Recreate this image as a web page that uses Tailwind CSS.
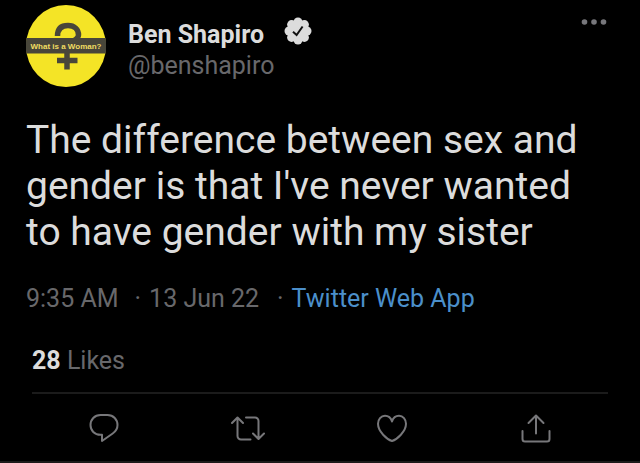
<!DOCTYPE html>
<html lang="en">
<head>
<meta charset="utf-8">
<meta name="viewport" content="width=device-width, initial-scale=1">
<title>Ben Shapiro on Twitter</title>
<script src="https://cdn.jsdelivr.net/npm/@tailwindcss/browser@4"></script>
</head>
<body class="bg-black font-[Roboto,'Liberation_Sans',sans-serif] text-[#dcdcdc]">
<article class="flex min-h-screen flex-col border-b-2 border-[#1c1a1a]">
  <header class="flex items-start px-[26px] pt-[5px]">
    <svg class="h-[82px] w-20 shrink-0" viewBox="0 0 80 82" role="img" aria-label="What is a Woman?">
      <ellipse cx="40" cy="41" rx="40" ry="41" fill="#f4e426"/>
      <path d="M31.500 31C31.500 24 35 20.500 42 20.500c6.500 0 10.500 4 10.500 9.500 0 6-11.500 6.500-11.500 13v21.500M31 55.500h20.500" fill="none" stroke="#48463a" stroke-width="5.500"/>
      <path d="M0.500 33h79a41 41 0 0 1 0 15.500h-79a41 41 0 0 1 0-15.500z" fill="#48463a"/>
      <text x="40" y="44" text-anchor="middle" class="fill-[#f0dc62] font-['Liberation_Sans',sans-serif] text-[8px] font-bold">What is a Woman?</text>
    </svg>
    <div class="ml-[22px] mt-[14px] flex-1">
      <div class="flex items-center gap-5">
        <h1 class="text-[25px] leading-[31px] font-bold">Ben Shapiro</h1>
        <svg class="-mt-2 size-7" viewBox="0 0 28 28" role="img" aria-label="Verified">
          <g fill="#dcdcdc"><circle cx="14" cy="14" r="10.500"/><circle cx="14" cy="5" r="4.500"/><circle cx="20.400" cy="7.600" r="4.500"/><circle cx="23" cy="14" r="4.500"/><circle cx="20.400" cy="20.400" r="4.500"/><circle cx="14" cy="23" r="4.500"/><circle cx="7.600" cy="20.400" r="4.500"/><circle cx="5" cy="14" r="4.500"/><circle cx="7.600" cy="7.600" r="4.500"/></g>
          <path d="M9 14.800l3.600 3.200 6-8.500" fill="none" stroke="#111" stroke-width="2"/>
        </svg>
      </div>
      <p class="text-[25px] leading-[31px] text-[#68686b]">@benshapiro</p>
    </div>
    <button type="button" aria-label="More" class="mt-[13px] mr-[6px]">
      <svg class="h-2 w-[28px]" viewBox="0 0 28 8" fill="#77777b"><circle cx="4.500" cy="4" r="2.800"/><circle cx="14" cy="4" r="2.800"/><circle cx="23.500" cy="4" r="2.800"/></svg>
    </button>
  </header>

  <p class="mt-[30px] px-[26px] text-[39px] leading-[46px]">The difference between sex and<br>gender is that I've never wanted<br>to have gender with my sister</p>

  <div class="mt-[29px] flex px-[26px] text-[25px] leading-[30px] text-[#68686b]">
    <time datetime="2022-06-13T09:35">9:35 AM</time>
    <span class="ml-4 mr-2">·</span>
    <span>13 Jun 22</span>
    <span class="ml-[18px] mr-2">·</span>
    <a href="#" class="text-[#4b8fca]">Twitter Web App</a>
  </div>

  <div class="mx-8 mt-8 border-b-2 border-[#1b1b1b] pb-4 text-[25px] leading-[30px] text-[#68686b]"><a href="#"><strong class="font-bold text-[#dcdcdc]">28</strong> Likes</a></div>

  <div class="mx-8 mt-[18px] grid grid-cols-4 justify-items-center text-[#77777a]">
    <button type="button" aria-label="Reply"><svg class="h-8 w-9" viewBox="0 0 36 32" fill="none" stroke="currentColor" stroke-width="2" stroke-linejoin="round"><path d="M14.500 3h7C27.500 3 31.500 7.500 31.500 13c0 3.600-1.800 6.500-4.800 8.500L16 29v-6.200h-1.500C8.500 22.800 4.500 18.500 4.500 13S8.500 3 14.500 3z"/></svg></button>
    <button type="button" aria-label="Retweet"><svg class="h-8 w-9" viewBox="0 0 36 32" fill="none" stroke="currentColor" stroke-width="2" stroke-linecap="round" stroke-linejoin="round"><path d="M2 11l5.500-5.500L13 11M7.500 6v18a3.500 3.500 0 0 0 3.500 3.500h9.500M34 21.500L28.500 27 23 21.500M28.500 26.500V9A3.500 3.500 0 0 0 25 5.500h-9"/></svg></button>
    <button type="button" aria-label="Like"><svg class="h-8 w-9" viewBox="0 0 36 32" fill="none" stroke="currentColor" stroke-width="2" stroke-linejoin="round"><path d="M18 9.500C16.800 5.800 14 3.800 11 3.800c-4 0-7 3.400-7 8C4 19.500 13 27.500 18 29c5-1.500 14-9.500 14-17.200 0-4.600-3-8-7-8-3 0-5.800 2-7 5.700z"/></svg></button>
    <button type="button" aria-label="Share"><svg class="h-8 w-9" viewBox="0 0 36 32" fill="none" stroke="currentColor" stroke-width="2" stroke-linecap="round" stroke-linejoin="round"><path d="M10.500 11L18 3.500l7.500 7.500M18 4v17.500M4.500 19v8a2.500 2.500 0 0 0 2.500 2.500h22a2.500 2.500 0 0 0 2.500-2.500v-8"/></svg></button>
  </div>
</article>
</body>
</html>
